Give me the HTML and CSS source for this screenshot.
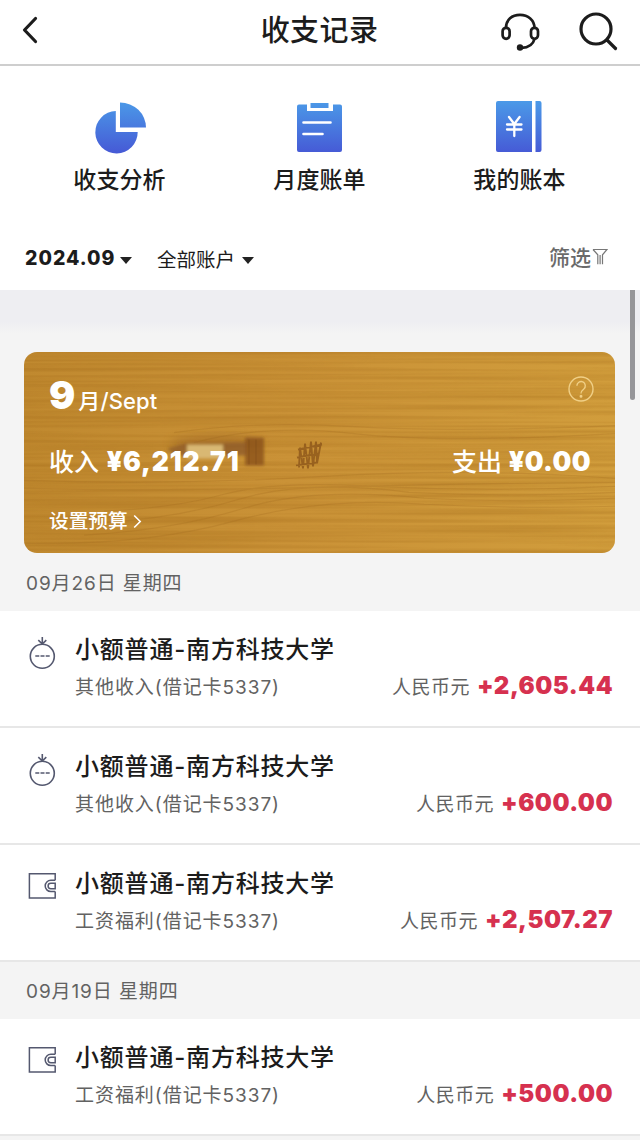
FILE: index.html
```html
<!DOCTYPE html>
<html lang="zh-CN">
<head>
<meta charset="utf-8">
<title>收支记录</title>
<link rel="stylesheet" href="styles.css">
</head>
<body>
<svg class="defs" width="0" height="0" aria-hidden="true">
  <defs>
    <linearGradient id="blue" gradientUnits="userSpaceOnUse" x1="0" y1="0" x2="0" y2="52">
      <stop offset="0" stop-color="#4b9be8"/><stop offset="1" stop-color="#465bd6"/>
    </linearGradient>
    <symbol id="purse" viewBox="0 0 30 36">
      <g fill="none" stroke="#54586f" stroke-width="1.6">
        <circle cx="15.300" cy="21.300" r="12"/>
        <path d="M8.300 21h4M13.500 21h4M18.700 21h4" stroke-width="1.7"/>
        <path d="M15.300 2v7M11.300 5.200l4 3.800 4-3.800"/>
      </g>
    </symbol>
    <symbol id="wallet" viewBox="0 0 30 28">
      <g fill="none" stroke="#54586f" stroke-width="1.5">
        <path d="M28.200 8.300V1.700H2.400v24.400h25.800v-6.600"/>
        <path d="M28.200 8.300h-4.400a5.600 5.600 0 0 0 0 11.200h4.400"/>
        <path d="M28.200 11.300h-4.400a2.700 2.700 0 0 0 0 5.400h4.400z"/>
      </g>
    </symbol>
  </defs>
</svg>
<div class="app">
  <header class="header">
    <svg class="back" width="16" height="28" viewBox="0 0 16 28"><path d="M13.500 2.500 2.500 14l11 11.500" fill="none" stroke="#1c1c1c" stroke-width="3.200" stroke-linecap="round" stroke-linejoin="round"/></svg>
    <h1 class="title">收支记录</h1>
    <div class="tools">
      <svg width="40" height="40" viewBox="0 0 40 40" fill="none" stroke="#1c1c1c" stroke-width="2.700">
        <path d="M6 17C6 8.500 12 3.800 20 3.800S34.500 9 34.500 17M34.500 28c-1.500 6-7 8.700-13 8.900"/>
        <rect x="2.600" y="16.800" width="7" height="11" rx="3.500"/>
        <rect x="31" y="16.800" width="7" height="11" rx="3.500"/>
        <circle cx="20" cy="36.500" r="3.200" fill="#1c1c1c" stroke="none"/>
      </svg>
      <svg width="40" height="40" viewBox="0 0 40 40" fill="none" stroke="#1c1c1c" stroke-width="3.200" stroke-linecap="round">
        <circle cx="18" cy="18" r="15"/><path d="m29 29 8.500 8.500"/>
      </svg>
    </div>
  </header>

  <nav class="actions">
    <div class="action">
      <svg width="54" height="54" viewBox="0 0 54 54" fill="url(#blue)">
        <path d="M22.800 11A21.200 21.200 0 1 0 44.700 32H22.800z"/>
        <path d="M27 2.500v25h26A26 25 0 0 0 27 2.500z"/>
      </svg>
      <span>收支分析</span>
    </div>
    <div class="action">
      <svg width="54" height="54" viewBox="0 0 54 54">
        <path d="M6 4.500h8V11h26V4.500h7a2 2 0 0 1 2 2V50a2 2 0 0 1-2 2H6a2 2 0 0 1-2-2V6.500a2 2 0 0 1 2-2z" fill="url(#blue)"/>
        <path d="M17.500 3h18v5h-18z" fill="url(#blue)"/>
        <path d="M10.500 22.500h27M10.500 34h19" stroke="#fff" stroke-width="2.600" stroke-linecap="round"/>
      </svg>
      <span>月度账单</span>
    </div>
    <div class="action">
      <svg width="54" height="54" viewBox="0 0 54 54">
        <path d="M5 1h34v51H5a2 2 0 0 1-2-2V3a2 2 0 0 1 2-2zM42.500 1h4a2 2 0 0 1 2 2v47a2 2 0 0 1-2 2h-4z" fill="url(#blue)"/>
        <path d="m16 17 5.300 7 5.300-7M21.300 24v12M14 24.500h14.500M14 29.500h14.500" fill="none" stroke="#fff" stroke-width="2.300" stroke-linecap="round"/>
      </svg>
      <span>我的账本</span>
    </div>
  </nav>

  <div class="filters">
    <span class="month">2024.09</span><i class="caret"></i>
    <span class="account">全部账户</span><i class="caret"></i>
    <span class="sift">筛选</span>
    <svg class="funnel" width="16" height="18" viewBox="0 0 16 18" fill="none" stroke="#777" stroke-width="1.200"><path d="M1 1.500h14l-4.500 5.300v9.500M1 1.500l4.800 5.300v9.500M8.100 7v9.300"/></svg>
  </div>

  <main class="content">
    <section class="card">
      <svg class="wood" viewBox="0 0 591 202" preserveAspectRatio="none" aria-hidden="true">
        <defs>
          <linearGradient id="base" x1="0" x2="1"><stop offset="0" stop-color="#c0892f"/><stop offset=".45" stop-color="#ca9237"/><stop offset="1" stop-color="#d19d3c"/></linearGradient>
          <filter id="grain" x="0" y="0" width="100%" height="100%" color-interpolation-filters="sRGB"><feTurbulence type="fractalNoise" baseFrequency=".003 .25" numOctaves="2" seed="8"/><feColorMatrix values="0 0 0 0 .58  0 0 0 0 .36  0 0 0 0 .06  2 0 0 0 -.7"/></filter>
          <filter id="soft" x="-20%" y="-50%" width="140%" height="200%"><feGaussianBlur stdDeviation="1.500"/></filter>
          <filter id="softer" x="-20%" y="-80%" width="140%" height="260%"><feGaussianBlur stdDeviation="5"/></filter>
          <filter id="blot" x="-20%" y="-20%" width="140%" height="140%"><feGaussianBlur stdDeviation=".7"/></filter>
        </defs>
        <rect width="591" height="202" fill="url(#base)"/>
        <rect width="591" height="202" filter="url(#grain)" opacity=".27"/>
        <g fill="none" stroke="#9c651b" stroke-width="1.200" opacity=".22">
          <path d="M0 129q150 5 300-4t291 2"/>
          <path d="M0 137q130 3 290-1t301-5"/>
          <path d="M80 160q70-3 120-17t150-8q120 6 241 0"/>
          <path d="M70 172q80-4 145-24t170-7q110 5 206 0"/>
          <path d="M60 184q90-5 160-27t180-10q100 5 191 0"/>
          <path d="M0 192q120 3 210-22t190-17q100 5 191 2"/>
          <path d="M170 91q70-19 160-9t261 0M150 81q80-12 180-6t261-1"/>
        </g>
        <ellipse cx="192" cy="92" rx="46" ry="8" fill="#8c551b" opacity=".4" filter="url(#softer)"/>
        <g filter="url(#soft)">
          <path d="M143 97l19-5 60-1v13h-70z" fill="#8c5a26" opacity=".7"/>
          <rect x="163" y="93" width="36" height="14" fill="#d9b873"/>
          <path d="M221 86h19v28h-19z" fill="#8b521c" opacity=".8"/>
        </g>
        <path d="M225 88v25M232 88v25" stroke="#6d3e15" opacity=".35"/>
        <path d="m275 116 1-20 3 21 2-25 3 25 3-27 2 25 3-25 1 22 4-21M274 98l24-5M273 106l22-4M272 114l21-3" fill="none" stroke="#865019" stroke-width="1.900" opacity=".7" filter="url(#blot)"/>
      </svg>
      <div class="card-body">
        <div class="card-top">
          <div class="period"><b>9</b><span>月/Sept</span></div>
          <svg width="26" height="26" viewBox="0 0 26 26" fill="none" stroke="#f0cf86" stroke-width="1.400"><circle cx="13" cy="13" r="12"/><path d="M8.900 9.800a4.200 4.200 0 1 1 6.900 3.200c-1.900 1.500-2.800 2.300-2.800 4.600"/><circle cx="13" cy="20.300" r=".8" fill="#f0cf86"/></svg>
        </div>
        <div class="totals"><span class="income">收入 <b>¥6,212.71</b></span><span class="expense">支出 <b>¥0.00</b></span></div>
        <div class="budget">设置预算<svg width="9" height="15" viewBox="0 0 9 15"><path d="m1.200 1.500 6 6-6 6" fill="none" stroke="#fff" stroke-width="1.600"/></svg></div>
      </div>
    </section>
    <h2 class="date">09月26日 星期四</h2>
    <div class="row">
      <svg class="kind" width="30" height="36"><use href="#purse"/></svg>
      <div class="info"><div class="name">小额普通-南方科技大学</div><div class="detail"><span class="source">其他收入(借记卡5337)</span><span class="currency">人民币元</span><b class="amount">+2,605.44</b></div></div>
    </div>
    <div class="row">
      <svg class="kind" width="30" height="36"><use href="#purse"/></svg>
      <div class="info"><div class="name">小额普通-南方科技大学</div><div class="detail"><span class="source">其他收入(借记卡5337)</span><span class="currency">人民币元</span><b class="amount">+600.00</b></div></div>
    </div>
    <div class="row">
      <svg class="kind wallet" width="30" height="28"><use href="#wallet"/></svg>
      <div class="info"><div class="name">小额普通-南方科技大学</div><div class="detail"><span class="source">工资福利(借记卡5337)</span><span class="currency">人民币元</span><b class="amount">+2,507.27</b></div></div>
    </div>
    <h2 class="date">09月19日 星期四</h2>
    <div class="row">
      <svg class="kind wallet" width="30" height="28"><use href="#wallet"/></svg>
      <div class="info"><div class="name">小额普通-南方科技大学</div><div class="detail"><span class="source">工资福利(借记卡5337)</span><span class="currency">人民币元</span><b class="amount">+500.00</b></div></div>
    </div>
    <div class="scrollbar"></div>
  </main>
</div>
</body>
</html>
```
FILE: styles.css
```css
* { box-sizing: border-box; }
body { margin: 0; background: #fff; color: #1c1c1c; font-family: Inter, "Noto Sans CJK SC", sans-serif; overflow: hidden; }
svg { display: block; flex: none; }
.defs { position: absolute; }
.app { width: 640px; height: 1140px; overflow: hidden; display: flex; flex-direction: column; }
.header { height: 66px; flex: none; border-bottom: 2px solid #cecece; display: grid; grid-template-columns: 1fr auto 1fr; align-items: center; padding: 0 22px 4px 22px; }
.title { margin: 1px 1px 0 0; font-size: 29px; line-height: 40px; font-weight: 500; letter-spacing: .4px; }
.tools { display: flex; justify-content: flex-end; gap: 38px; padding-top: 2px; }
.actions { height: 158px; flex: none; display: grid; grid-template-columns: repeat(3, 200px); justify-content: center; padding-top: 34px; }
.action { display: flex; flex-direction: column; align-items: center; gap: 9px; font-size: 23px; line-height: 34px; font-weight: 500; letter-spacing: .1px; }
.action span { margin-right: 1px; }
.filters { height: 66px; flex: none; display: flex; align-items: center; padding: 3px 32px 0 25px; }
.month { font-size: 19.500px; font-weight: 800; letter-spacing: 1px; width: 95px; margin-top: -1px; }
.caret { border: 6px solid transparent; border-top: 7px solid #222; border-bottom: 0; margin-top: 3px; }
.account { font-size: 19.500px; margin: -1px 7px 0 25px; width: 78px; white-space: nowrap; }
.sift { font-size: 21px; font-weight: 500; color: #6a6a6a; margin: -6px 1px 0 auto; }
.funnel { margin-top: -4px; }
.content { position: relative; flex: 1; background: linear-gradient(#eeeef2 0 32px, #f4f4f4 44px); padding-top: 62px; }
.card { position: relative; height: 201px; margin: 0 25px 1px 24px; border-radius: 13px; overflow: hidden; color: #fff; }
.wood { position: absolute; inset: 0; width: 100%; height: 100%; }
.card-body { position: relative; padding: 20px 25px 0 26px; }
.card-top { display: flex; justify-content: space-between; height: 64px; }
.card-top > svg { margin: 4px -4px 0 0; }
.period { display: flex; align-items: baseline; height: 48px; line-height: 46px; }
.period b { font-size: 39px; font-weight: 900; margin-left: -1px; margin-right: 3px; }
.period span { font-size: 22px; font-weight: 500; letter-spacing: .1px; }
.totals { display: flex; justify-content: space-between; align-items: center; height: 48px; font-size: 25px; font-weight: 500; }
.totals b { font-size: 26.500px; font-weight: 900; letter-spacing: .8px; }
.income { margin-left: -1px; word-spacing: 1px; }
.expense { margin-right: -1px; }
.expense b { letter-spacing: .4px; }
.budget { display: flex; align-items: center; gap: 5px; font-size: 19.700px; font-weight: 500; line-height: 28px; margin: 23px 0 0 -1px; }
.date { height: 57px; margin: 0; padding-left: 26px; font-size: 19px; line-height: 60px; font-weight: 400; letter-spacing: .9px; color: #626262; }
.row { height: 117px; display: flex; background: #fff; border-bottom: 2px solid #e7e7e7; padding: 21px 27px 0 27px; }
.kind { margin: 3px 18px 0 0; }
.wallet { margin-top: 6px; }
.info { flex: 1; }
.name { font-size: 24px; line-height: 36px; font-weight: 500; letter-spacing: .8px; white-space: nowrap; }
.detail { display: flex; align-items: center; height: 35px; color: #626262; font-size: 19px; white-space: nowrap; }
.source { letter-spacing: .95px; }
.currency { margin-left: auto; letter-spacing: .5px; }
.amount { color: #d6314f; font-size: 24px; font-weight: 900; letter-spacing: .5px; margin-left: 7px; }
.scrollbar { position: absolute; top: 0; right: 5px; width: 5px; height: 110px; border-radius: 0 0 3px 3px; background: #969699; }
```
